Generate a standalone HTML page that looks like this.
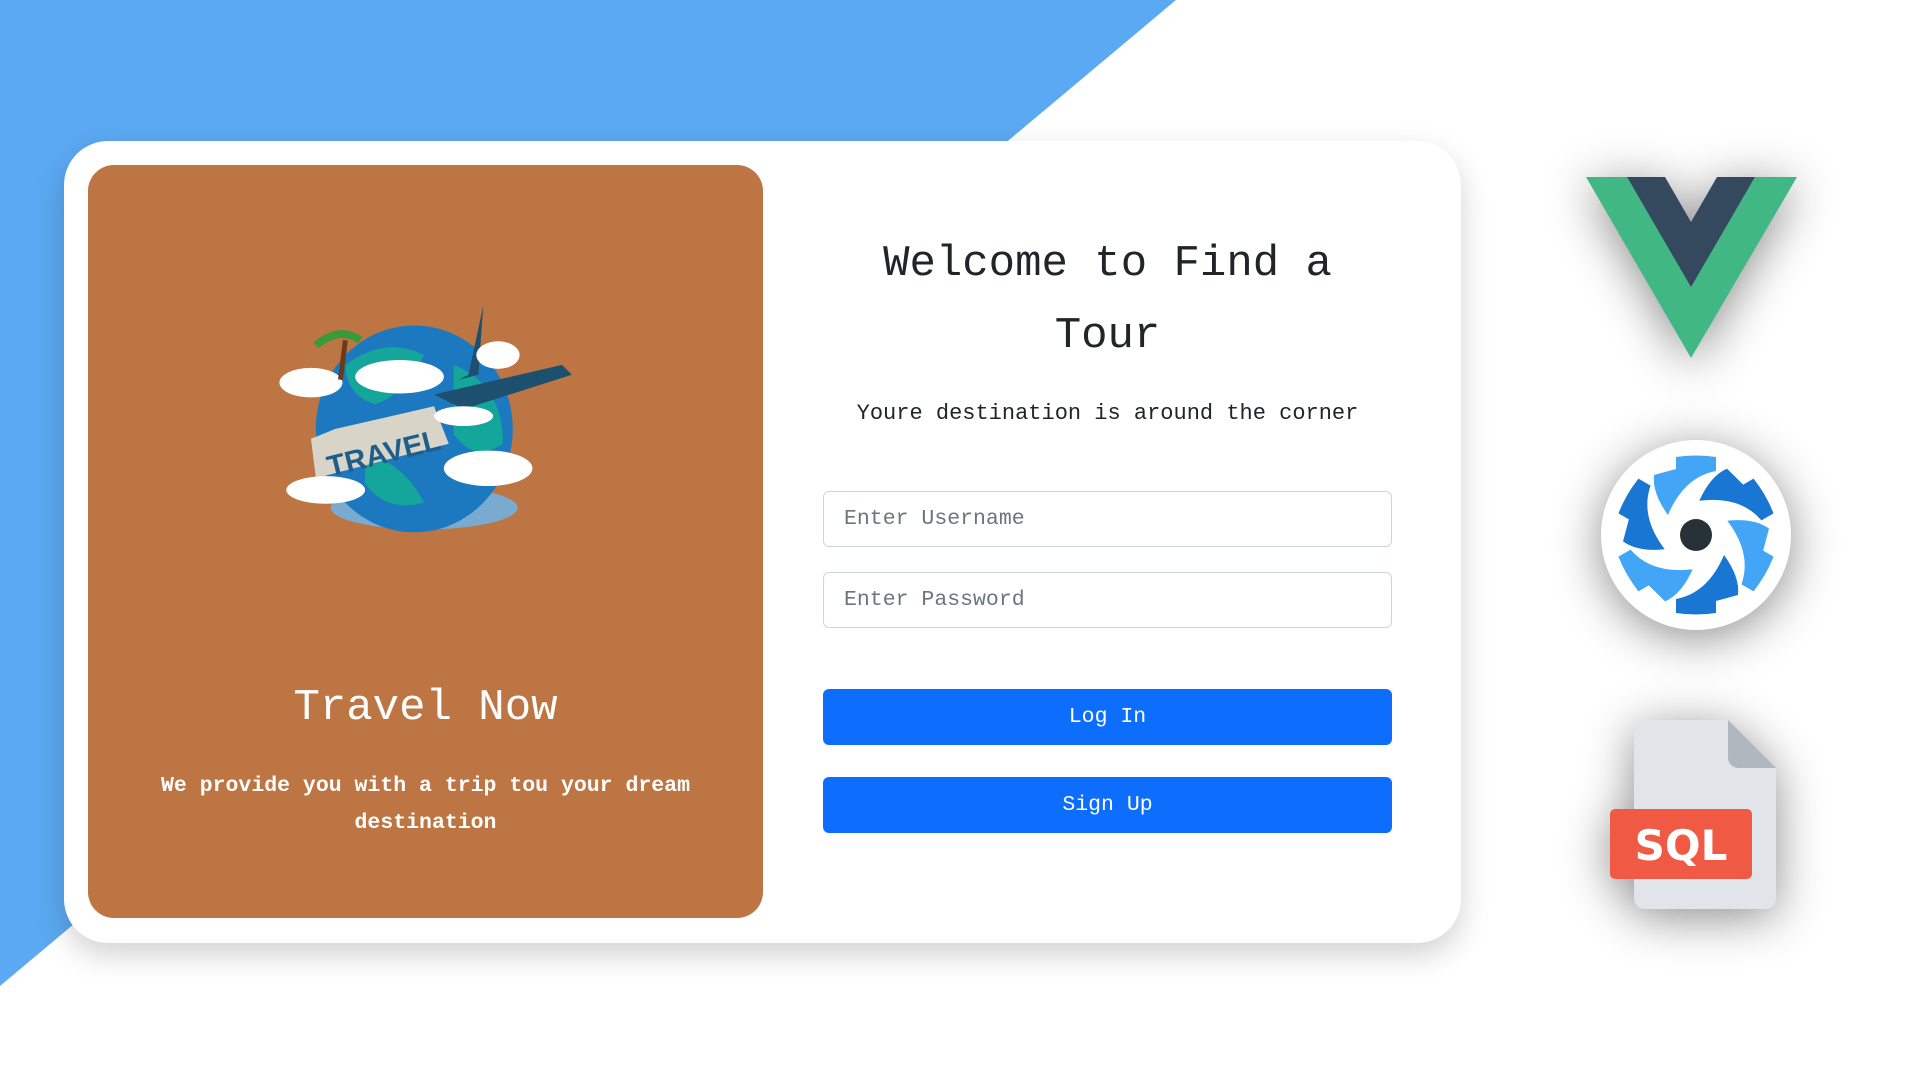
<!DOCTYPE html>
<html><head><meta charset="utf-8"><style>
*{margin:0;padding:0;box-sizing:border-box}
body{width:1920px;height:1080px;overflow:hidden;background:#fff;position:relative;font-family:"Liberation Mono",monospace}
.bg{position:absolute;left:0;top:0}
.card{position:absolute;left:64px;top:141px;width:1397px;height:802px;background:#fff;border-radius:44px;box-shadow:0 12px 30px rgba(0,0,0,.18)}
.panel{position:absolute;left:88px;top:165px;width:675px;height:753px;background:#bd7543;border-radius:26px}
.t{position:absolute;text-align:center;color:#212529}
input,.btn{position:absolute;left:823px;width:569px;height:56px;border-radius:6px;font-family:"Liberation Mono",monospace;font-size:21.5px}
input{border:1.5px solid #ced4da;padding-left:20px;background:#fff;color:#6c757d}
input::placeholder{color:#6c757d}
.btn{background:#0d6efd;color:#fff;text-align:center;line-height:56px}
</style></head><body>
<svg class="bg" width="1920" height="1080"><polygon points="0,0 1176,0 0,986" fill="#5ba9f2"/></svg>
<div class="card"></div>
<div class="panel"></div>
<svg style="position:absolute;left:276px;top:296px" width="316" height="256" viewBox="0 0 320 260">
<ellipse cx="150" cy="215" rx="95" ry="22" fill="#7aaad0"/>
<ellipse cx="140" cy="135" rx="100" ry="105" fill="#1c79c0"/>
<path d="M70 70 Q110 40 150 60 Q130 100 100 110 Q70 100 70 70Z M180 70 Q230 90 230 150 Q200 170 180 140Z M90 160 Q130 170 150 210 Q110 220 90 190Z" fill="#14a69a"/>
<path d="M60 135 L160 112 L175 150 L40 185 L35 145Z" fill="#d9d4c8"/>
<text x="50" y="172" font-family="Liberation Sans,sans-serif" font-weight="bold" font-size="30" fill="#1e5f8a" transform="rotate(-14 100 160)">TRAVEL</text>
<path d="M160 100 L290 70 L300 80 L190 115Z" fill="#1d4f6e"/>
<path d="M210 10 L195 80 L185 85 L205 80Z" fill="#1d4f6e"/>
<g fill="#fff"><ellipse cx="35" cy="88" rx="32" ry="15"/><ellipse cx="125" cy="82" rx="45" ry="17"/><ellipse cx="225" cy="60" rx="22" ry="14"/><ellipse cx="215" cy="175" rx="45" ry="18"/><ellipse cx="50" cy="197" rx="40" ry="14"/><ellipse cx="190" cy="122" rx="30" ry="10"/></g>
<path d="M65 85 L70 45" stroke="#6b3a1a" stroke-width="5"/><path d="M40 50 Q65 30 85 45" stroke="#3a9a3a" stroke-width="8" fill="none"/>
</svg>
<div class="t" style="left:88px;width:675px;top:681px;font-size:44px;line-height:54px;color:#fff">Travel Now</div>
<div class="t" style="left:110px;width:631px;top:768px;font-size:21.5px;line-height:37px;color:#fff;font-weight:bold">We provide you with a trip tou your dream destination</div>
<div class="t" style="left:800px;width:615px;top:228px;font-size:44px;line-height:72px">Welcome to Find a<br>Tour</div>
<div class="t" style="left:780px;width:655px;top:401px;font-size:22px;line-height:26px">Youre destination is around the corner</div>
<input style="top:491px" placeholder="Enter Username">
<input style="top:572px" placeholder="Enter Password">
<div class="btn" style="top:689px">Log In</div>
<div class="btn" style="top:777px">Sign Up</div>
<svg style="position:absolute;left:1500px;top:100px;filter:drop-shadow(0 8px 24px rgba(0,0,0,.45))" width="400" height="900">
<g transform="translate(-1500,-100)">
<polygon points="1586,177 1627,177 1691,287 1755,177 1797,177 1691,358" fill="#41b883"/>
<polygon points="1627,177 1665,177 1691,222 1717,177 1755,177 1691,287" fill="#34495e"/>
<g transform="translate(1696,535)">
<circle r="95" fill="#fff"/>
<defs><path id="bl" d="M-20 -78 Q0 -81 20 -78 L20 -64 Q-12 -58 -28 -20 Q-44 -42 -42 -60 L-20 -66Z"/></defs>
<use href="#bl" fill="#42a5f5"/>
<use href="#bl" fill="#1976d2" transform="rotate(60)"/>
<use href="#bl" fill="#42a5f5" transform="rotate(120)"/>
<use href="#bl" fill="#1976d2" transform="rotate(180)"/>
<use href="#bl" fill="#42a5f5" transform="rotate(240)"/>
<use href="#bl" fill="#1976d2" transform="rotate(300)"/>
<circle r="16" fill="#263238"/></g>
<path d="M1646 720 H1728 L1776 768 V897 Q1776 909 1764 909 H1646 Q1634 909 1634 897 V732 Q1634 720 1646 720Z" fill="#e1e4e8"/>
<path d="M1728 720 V756 Q1728 768 1740 768 H1776Z" fill="#b0b7bf"/>
<rect x="1610" y="809" width="142" height="70" rx="5" fill="#f05a45"/>
<text x="1681" y="860" text-anchor="middle" font-family="DejaVu Sans,sans-serif" font-weight="bold" font-size="42" fill="#fff">SQL</text>
</g></svg>
</body></html>
